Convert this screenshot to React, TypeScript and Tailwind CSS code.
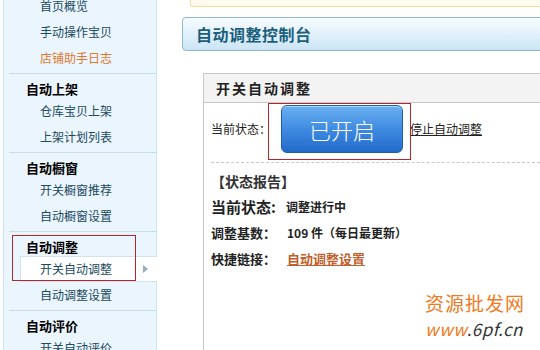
const item = "flex h-[26px] items-center pl-[31px] text-[12px] text-[#1a4a5e]";
const head = "flex h-[18px] items-center pl-[17px] text-[13px] font-bold text-black";

function Group({ title, children, first }: { title?: string; children: React.ReactNode; first?: boolean }) {
  return (
    <div className={`relative ml-[5px] border-b border-[#c6dbe8] pb-[2px] ${first ? "-mt-[7px]" : "pt-[6px]"}`}>
      {title && <div className={head}>{title}</div>}
      {children}
    </div>
  );
}

function Sidebar() {
  return (
    <div className="ml-[3px] w-[154px] shrink-0 border-x border-[#cfe1ee] bg-[#ebf5fd]">
      <Group first>
        <div className={item}>首页概览</div>
        <div className={item}>手动操作宝贝</div>
        <div className={`${item} !text-[#dd7a2f]`}>店铺助手日志</div>
      </Group>
      <Group title="自动上架">
        <div className={item}>仓库宝贝上架</div>
        <div className={item}>上架计划列表</div>
      </Group>
      <Group title="自动橱窗">
        <div className={item}>开关橱窗推荐</div>
        <div className={item}>自动橱窗设置</div>
      </Group>
      <Group title="自动调整">
        <div className="relative -mr-[1px] ml-[11px] flex h-[26px] items-center border-y border-l border-[#d3e3ee] bg-white pl-[19px] text-[12px] text-[#1a4a5e]">
          开关自动调整
          <span className="absolute right-[9px] top-[8px] h-0 w-0 border-y-[4px] border-l-[5px] border-y-transparent border-l-[#93aebd]" />
        </div>
        <div className={item}>自动调整设置</div>
        <div className="pointer-events-none absolute left-[3px] top-[3px] h-[46px] w-[124px] border border-[#b3262b]" />
      </Group>
      <Group title="自动评价">
        <div className={item}>开关自动评价</div>
      </Group>
    </div>
  );
}

function Main() {
  return (
    <div className="relative flex min-w-0 flex-1 flex-col">
      <div className="ml-[33px] h-[7px] rounded-bl-[3px] border-b border-l border-[#f3d9a9] bg-[#fffaee]" />
      <div className="-mr-[10px] ml-[25px] mt-[10px] flex h-[34px] items-center rounded-l-[4px] border border-[#8fb8cb] bg-gradient-to-b from-[#f7fcff] to-[#cbe5f5] pl-[13px] text-[16px] font-bold tracking-[0.5px] text-[#1b5e7b]">
        自动调整控制台
      </div>
      <div className="-mr-[10px] ml-[46px] mt-[22px] flex-1 border-l border-t border-[#c8c8c8]">
        <div className="flex h-[29px] items-center border-b border-[#c8c8c8] bg-[#f3f3f3] pl-[12px] text-[14px] font-bold tracking-[2px] text-[#222]">
          开关自动调整
        </div>
        <div className="flex items-center pl-[7px] pt-[2px]">
          <span className="w-[70px] text-[12px] text-[#222]">当前状态：</span>
          <span className="relative">
            <button
              type="button"
              className="flex h-[48px] w-[122px] items-center justify-center rounded-[6px] border border-[#1d5fae] bg-gradient-to-b from-[#6aafef] via-[#3f8ce2] to-[#2269c9] text-[22px] font-light text-white shadow-[inset_0_1px_0_rgba(255,255,255,0.5)]"
            >
              已开启
            </button>
            <span className="pointer-events-none absolute -left-[13px] -top-[2px] h-[57px] w-[143px] border border-[#b3262b]" />
          </span>
          <a className="ml-[7px] text-[12px] text-[#222] underline">停止自动调整</a>
        </div>
        <div className="ml-[7px] mt-[9px] border-t border-dashed border-[#c8c8c8]" />
        <div className="mt-[5px] pl-[7px] font-bold text-[#222]">
          <div className="flex h-[26px] items-center text-[14px] text-[#333]">【状态报告】</div>
          <div className="flex h-[26px] items-center">
            <span className="w-[75px] text-[15px]">当前状态:</span>
            <span className="text-[12px]">调整进行中</span>
          </div>
          <div className="flex h-[26px] items-center">
            <span className="w-[76px] text-[13px]">调整基数：</span>
            <span className="text-[12px]">109 件（每日最更新）</span>
          </div>
          <div className="flex h-[26px] items-center">
            <span className="w-[76px] text-[13px]">快捷链接：</span>
            <a className="text-[13px] text-[#c0602c] underline">自动调整设置</a>
          </div>
        </div>
      </div>
      <div className="absolute left-[268px] top-[293px] flex flex-col items-start leading-none">
        <span className="text-[19px] tracking-[1px] text-[#ef7a22]">资源批发网</span>
        <span className="mt-[8px] text-[17px] italic tracking-[0.5px] text-[#333]">
          <span className="text-[#ef7a22]">www</span>.6pf.cn
        </span>
      </div>
    </div>
  );
}

export default function App() {
  return (
    <div className="flex h-[350px] w-[540px] overflow-hidden bg-white font-['Noto_Sans_CJK_SC',sans-serif]">
      <Sidebar />
      <Main />
    </div>
  );
}
